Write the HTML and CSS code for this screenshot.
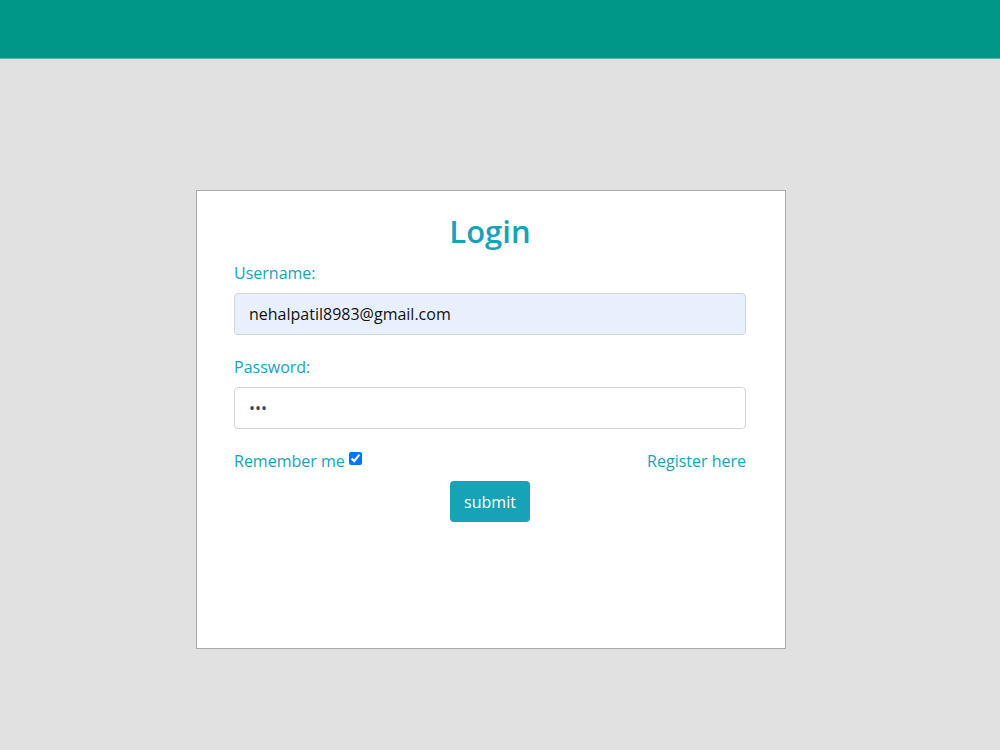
FILE: index.html
```html
<!DOCTYPE html>
<html lang="en">
<head>
    <meta charset="UTF-8">
    <meta name="viewport" content="width=device-width, initial-scale=1.0">
    <title>Login</title>
    <link rel="stylesheet" href="styles.css">
</head>
<body>
    <div class="topbar"></div>
    <div class="page">
        <form class="login-box">
            <h2>Login</h2>
            <label for="username">Username:</label>
            <input class="field autofilled" type="text" id="username" value="nehalpatil8983@gmail.com">
            <label for="password">Password:</label>
            <input class="field" type="password" id="password" value="abc">
            <div class="options">
                <label class="remember">Remember me <input type="checkbox" checked></label>
                <a href="#" class="register">Register here</a>
            </div>
            <div class="actions">
                <button type="button">submit</button>
            </div>
        </form>
    </div>
</body>
</html>
```
FILE: styles.css
```css
body {
    font-family: "Open Sans", "Noto Sans", sans-serif;
    margin: 0;
    padding: 0;
    background-color: #e1e1e1;
}
.topbar {
    height: 58px;
    background-color: #009688;
    border-bottom: 1px solid #4db6ac;
}
.page {
    padding-top: 131px;
}
.login-box {
    width: 512px;
    height: 421px;
    margin: 0 0 0 196px;
    padding: 18px 39px 18px 37px;
    background-color: #ffffff;
    border: 1px solid #aaaaaa;
}
h2 {
    margin: 0 0 9px 0;
    text-align: center;
    color: #17a2b8;
    font-size: 31px;
    font-weight: 600;
    line-height: 44px;
}
label {
    display: block;
    color: #17a2b8;
    font-size: 16px;
    margin-bottom: 9px;
}
.field {
    display: block;
    width: 100%;
    box-sizing: border-box;
    height: 42px;
    padding: 6px 14px;
    margin-bottom: 21px;
    border: 1px solid #d3d3d8;
    border-radius: 4px;
    font-family: inherit;
    font-size: 16px;
    color: #111;
}
#password {
    color: #444;
}
.autofilled {
    background-color: #e8f0fe;
}
.options {
    display: flex;
    justify-content: space-between;
    align-items: center;
    margin-top: 20px;
}
.remember {
    margin: 0;
}
.remember input {
    margin: 0;
    vertical-align: 2px;
}
.register {
    color: #17a2b8;
    text-decoration: none;
    font-size: 16px;
}
.actions {
    text-align: center;
    margin-top: 9px;
}
button {
    background-color: #17a2b8;
    color: white;
    border: none;
    border-radius: 4px;
    padding: 0 14px;
    height: 41px;
    font-family: inherit;
    font-size: 16px;
    cursor: pointer;
}
```
